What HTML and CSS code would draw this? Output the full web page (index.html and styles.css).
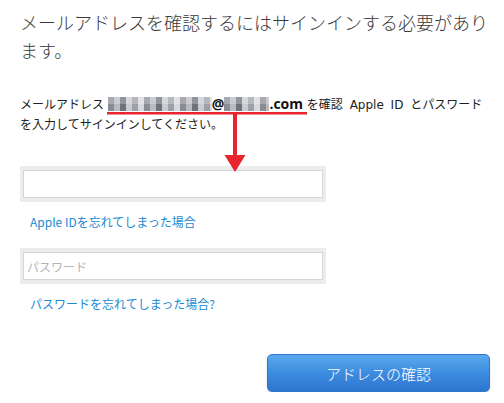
FILE: index.html
```html
<!DOCTYPE html>
<html lang="ja">
<head>
<meta charset="utf-8">
<link rel="stylesheet" href="styles.css">
</head>
<body>
<div class="page">
  <h1 class="title">メールアドレスを確認するにはサインインする必要があります。</h1>
  <p class="intro">メールアドレス <span class="email"><span class="blur b1"></span><b>@</b><span class="blur b2"></span><b>.com</b></span> を確認 Apple ID とパスワードを入力してサインインしてください。</p>
  <div class="field"><input class="input" type="text"></div>
  <a class="link" href="#">Apple IDを忘れてしまった場合</a>
  <div class="field"><input class="input" type="password" placeholder="パスワード"></div>
  <a class="link" href="#">パスワードを忘れてしまった場合?</a>
  <div class="actions"><button class="btn">アドレスの確認</button></div>
  <svg class="annot" width="504" height="180" viewBox="0 0 504 180">
    <rect x="107" y="112" width="200" height="2.5" fill="#e8252e"/>
    <rect x="233" y="113" width="4" height="44" fill="#e8252e"/>
    <polygon points="224.5,155 245.5,155 235,172" fill="#e8252e"/>
  </svg>
</div>
</body>
</html>
```

FILE: styles.css
```css
html, body {
  margin: 0;
  padding: 0;
  background: #fff;
}
body {
  font-family: "Noto Sans CJK JP", "Noto Sans", sans-serif;
  color: #333;
}
.page {
  position: relative;
  width: 470px;
  padding: 8px 14px 0 20px;
  display: flex;
  flex-direction: column;
  align-items: flex-start;
}
.title {
  margin: 0;
  font-size: 18px;
  line-height: 28px;
  font-weight: 300;
  color: #3a3a3a;
}
.intro {
  margin: 31px 0 0;
  font-family: "DejaVu Sans", "Noto Sans CJK JP", sans-serif;
  font-size: 12px;
  line-height: 20px;
  word-spacing: 3px;
  color: #222;
}
.email {
  margin: 0 -3px;
  font-family: "Open Sans", "Liberation Sans", sans-serif;
  font-size: 14px;
  line-height: 14px;
  word-spacing: 0;
  color: #111;
}
.email b {
  font-weight: 700;
}
.blur {
  display: inline-block;
  vertical-align: -2px;
  height: 14px;
  background:
    linear-gradient(180deg, rgba(255,255,255,0.25) 0 50%, rgba(0,0,0,0) 50%),
    repeating-linear-gradient(90deg, #8a8c94 0 6px, #b9bbc2 6px 12px, #6f727c 12px 18px, #c9cbd0 18px 24px, #9ea0a8 24px 30px, #d8d9dc 30px 36px);
}
.b1 {
  width: 104px;
}
.b2 {
  width: 45px;
}
.field {
  margin-top: 31px;
  width: 300px;
  padding: 4px 3px;
  background: #ececec;
}
.field + .link {
  margin-top: 10px;
}
.link + .field {
  margin-top: 16px;
}
.input {
  display: block;
  box-sizing: border-box;
  width: 100%;
  height: 28px;
  margin: 0;
  border: 1px solid #d6d6d6;
  background: #fff;
  padding: 0 3px;
  font-family: "Noto Sans CJK JP", sans-serif;
  font-size: 12px;
  outline: none;
}
.input::placeholder {
  color: #b4b4b4;
}
.link {
  display: block;
  padding-left: 10px;
  font-size: 12px;
  line-height: 20px;
  color: #1a8ad4;
  text-decoration: none;
}
.actions {
  align-self: stretch;
  display: flex;
  justify-content: flex-end;
  margin-top: 40px;
}
.btn {
  width: 223px;
  height: 38px;
  border: 1px solid #2f76cc;
  border-radius: 5px;
  background: linear-gradient(180deg, #58a9ee 0%, #3a89de 55%, #2e75d0 100%);
  box-shadow: 0 1px 2px rgba(0,0,0,0.2);
  color: #fff;
  font-family: "Noto Sans CJK JP", sans-serif;
  font-size: 15px;
  font-weight: 300;
  cursor: pointer;
}
.annot {
  position: absolute;
  left: 0;
  top: 0;
  pointer-events: none;
}
```
